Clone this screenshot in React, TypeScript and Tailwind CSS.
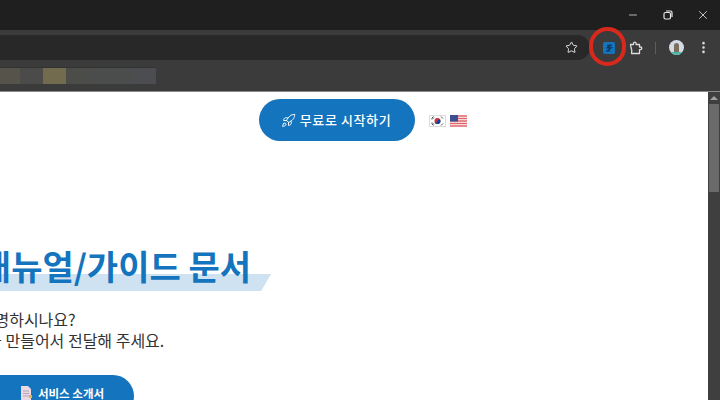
import { Minus, X, Star, EllipsisVertical, Rocket } from 'lucide-react';

const blurs = [
  { w: 'w-[20px]', c: 'bg-[#55534a]' },
  { w: 'w-[23px]', c: 'bg-[#4b4b49]' },
  { w: 'w-[23px]', c: 'bg-[#736b4e]' },
  { w: 'w-[22px]', c: 'bg-[#4c4d48]' },
  { w: 'w-[45px]', c: 'bg-[#4b4c4c]' },
  { w: 'w-[23px]', c: 'bg-[#4c4d50]' },
];

function KoreaFlag() {
  return (
    <svg width="17" height="12" viewBox="0 0 17 12">
      <rect x="0.5" y="0.5" width="16" height="11" fill="#fff" stroke="#ddd" />
      <circle cx="8.5" cy="6" r="3" fill="#cd2e3a" />
      <path d="M5.5 6a3 3 0 0 0 6 0 1.5 1.5 0 0 0-3 0 1.5 1.5 0 0 1-3 0z" fill="#0047a0" />
      <path d="M2.5 3.5l2-2M3 4.5l2-2M12 1.5l2 2M12 10.500l2-2M3 7.500l2 2M2.500 8.500l2 2" stroke="#222" strokeWidth="0.8" />
    </svg>
  );
}

function UsFlag() {
  return (
    <svg width="17" height="12" viewBox="0 0 17 12">
      <rect width="17" height="12" fill="#fff" />
      <path d="M0 1h17M0 3.500h17M0 6h17M0 8.500h17M0 11h17" stroke="#e0636a" strokeWidth="1.300" />
      <rect width="8" height="6.500" fill="#3c4f8f" />
    </svg>
  );
}

export default function App() {
  return (
    <div className="relative w-[720px] h-[400px] overflow-hidden flex flex-col bg-white font-['Noto_Sans_CJK_KR','Noto_Sans',sans-serif]">
      {/* Title bar */}
      <div className="h-[30px] bg-[#1f1f1f] flex justify-end items-center text-[#e8e8e8] shrink-0">
        <div className="w-[35px] flex justify-center"><Minus size={12} strokeWidth={1.5} /></div>
        <div className="w-[35px] flex justify-center">
          <svg width="10" height="10" viewBox="0 0 10 10" fill="none" stroke="currentColor" strokeWidth="1.200">
            <rect x="1" y="2.500" width="6.500" height="6.500" rx="1.500" />
            <path d="M3 1h4.500A1.500 1.500 0 0 1 9 2.500V7" />
          </svg>
        </div>
        <div className="w-[35px] flex justify-center"><X size={14} strokeWidth={1.4} /></div>
      </div>

      {/* Toolbar */}
      <div className="h-[35px] bg-[#3b3b3b] flex items-start pt-[5px] shrink-0">
        <div className="w-[590px] h-[25px] bg-[#282828] rounded-r-full flex items-center justify-end pr-[12px]">
          <Star size={13} strokeWidth={1.8} className="text-[#e3e3e3]" />
        </div>
        <div className="ml-[13px] mt-[7px] w-[12px] h-[12px] rounded-[2px] bg-[#1474bd] flex items-center justify-center">
          <svg width="8" height="9" viewBox="0 0 8 9" fill="none" stroke="#10355a" strokeWidth="1.100">
            <path d="M2 1.500L6.500 1 1.500 4 6.500 3.700 2 7 5.500 7" />
          </svg>
        </div>
        <svg width="14" height="14" viewBox="0 0 14 14" fill="none" stroke="#dcdcdc" strokeWidth="1.300" className="ml-[14px] mt-[6px]">
          <path d="M1.500 3.500H4.500V2.500a1.300 1.300 0 0 1 2.600 0v1H10.500V6h1a1.300 1.300 0 0 1 0 2.600h-1V12.500H2.500L2.800 9.500 2 6.500z" strokeLinejoin="round" />
        </svg>
        <div className="ml-[12px] mt-[7px] w-px h-[12px] bg-[#5e5e5e]" />
        <div className="ml-[13px] mt-[5px] w-[15px] h-[15px] rounded-full bg-[#d4dbe4] overflow-hidden flex flex-col items-center justify-end">
          <div className="w-[5px] h-[9px] bg-[#7d6f5f] rounded-t-full" />
          <div className="w-full h-[3px] bg-[#4fb6a6]" />
        </div>
        <EllipsisVertical size={15} strokeWidth={2.2} className="ml-[12px] mt-[5px] text-[#dcdcdc]" />
      </div>

      {/* Bookmarks bar */}
      <div className="h-[26px] bg-[#3b3b3b] flex items-start shrink-0">
        <div className="flex h-[17px] mt-[2px] border-t border-[#333333]">
          {blurs.map((b, i) => (
            <div key={i} className={`${b.w} ${b.c}`} />
          ))}
        </div>
      </div>

      {/* Page */}
      <div className="flex-1 min-h-0 flex border-t border-[#8a8a8a]">
        <div className="flex-1 min-w-0 overflow-hidden flex flex-col">
          <div className="flex items-center pt-[7px] pl-[259px]">
            <div className="w-[156px] h-[42px] rounded-full bg-[#1474bd] flex items-center justify-center gap-[4px] pr-[2px] text-white text-[13px] tracking-[0.6px] font-medium">
              <Rocket size={15} strokeWidth={1.5} />
              <span>무료로 시작하기</span>
            </div>
            <div className="ml-[14px] mt-[2px] flex gap-[4px]">
              <KoreaFlag />
              <UsFlag />
            </div>
          </div>

          <div className="mt-[101px] ml-[-120px] w-[420px]">
            <div className="relative w-[371px] h-[48px]">
              <div className="absolute left-0 right-[-20px] top-[32px] h-[17px] bg-[#cfe2f2] [clip-path:polygon(0_0,100%_0,97.500%_100%,0_100%)]" />
              <h1 className="relative text-right whitespace-nowrap text-[34px] leading-[48px] font-bold text-[#1474bd]">
                문서 매뉴얼/가이드 문서
              </h1>
            </div>
            <div className="mt-[19px] text-[16px] leading-[21px] text-[#333333] whitespace-nowrap">
              <p className="pl-[52px]">어떻게 설명하시나요?</p>
              <p className="pl-[63px]">매뉴얼을 만들어서 전달해 주세요.</p>
            </div>
            <div className="mt-[24px] ml-[100px] w-[154px] h-[42px] rounded-full bg-[#1474bd] flex items-start pt-[10px] justify-center gap-[6px] pl-[10px] text-white text-[11.500px] leading-[16px] font-bold">
              <svg width="12" height="14" viewBox="0 0 12 14" className="mt-[1px]">
                <path d="M1 0h7l3 3v11H1z" fill="#ead9e4" />
                <path d="M3 5h6M3 7.500h6M3 10h6" stroke="#b9a3b5" />
                <rect x="9" y="9" width="3" height="3" fill="#e8b24a" />
              </svg>
              <span>서비스 소개서</span>
            </div>
          </div>
        </div>

        {/* Scrollbar */}
        <div className="w-[12px] shrink-0 bg-[#3f3f3f] flex flex-col items-center">
          <div className="h-[12px] flex items-center justify-center">
            <div className="w-0 h-0 border-x-[4px] border-x-transparent border-b-[4px] border-b-[#a0a0a0]" />
          </div>
          <div className="w-[10px] h-[88px] bg-[#6a6a6a]" />
        </div>
      </div>

      {/* Red annotation ring */}
      <div className="absolute left-[589px] top-[27px] w-[37px] h-[39px] rounded-full border-[4px] border-[#d9291c]" />
    </div>
  );
}
